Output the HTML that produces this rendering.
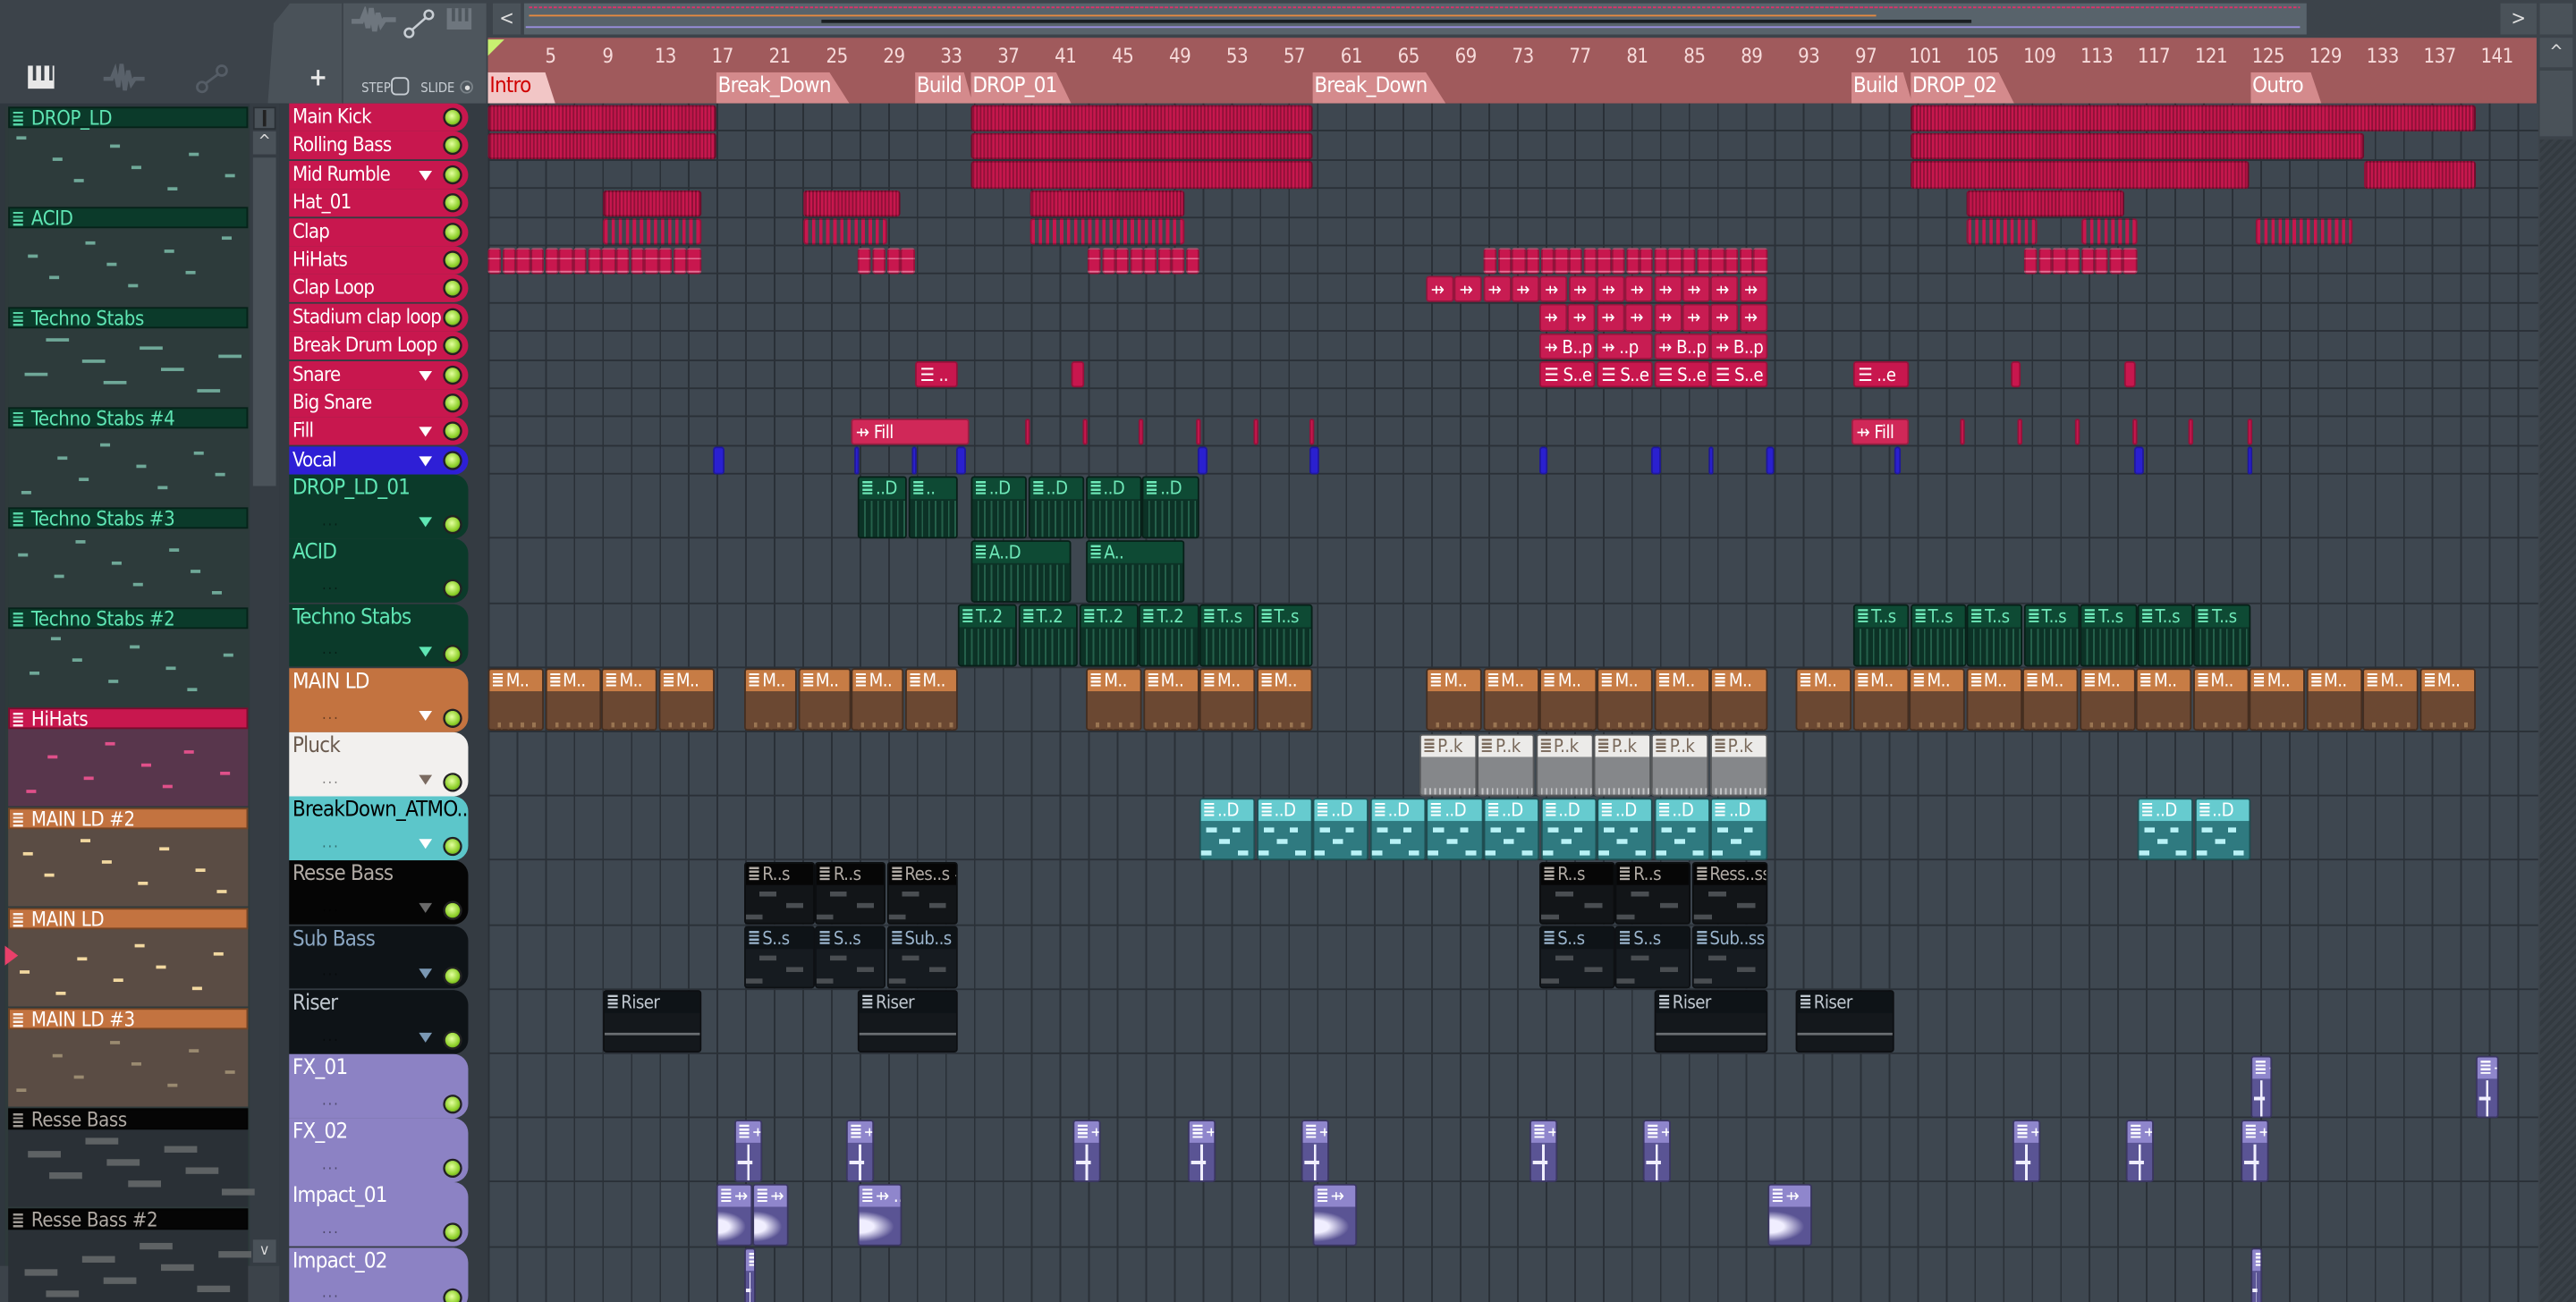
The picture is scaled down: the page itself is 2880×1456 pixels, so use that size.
<!DOCTYPE html>
<html><head><meta charset="utf-8">
<style>
html,body{margin:0;padding:0;width:2880px;height:1456px;overflow:hidden;background:#3a4148;}
#app{position:absolute;left:0;top:0;width:1568px;height:793px;transform:scale(1.83673,1.8361);transform-origin:0 0;background:#3c434a;font-family:"Liberation Sans Narrow","DejaVu Sans Condensed","Liberation Sans",sans-serif;overflow:hidden;}
.a{position:absolute;}
#grid{position:absolute;left:297px;top:63px;width:1248px;height:730px;background-color:#3e4750;
background-image:repeating-linear-gradient(90deg,#2a3037 0,#2a3037 1px,transparent 1px,transparent 17.4px);}
.hl{position:absolute;left:0;width:1248px;height:1px;background:#2a3037;}
.hd{position:absolute;left:176px;width:109px;border-radius:0 9px 9px 0;box-sizing:border-box;padding-left:2px;font-size:12px;letter-spacing:-0.4px;color:#fff;white-space:nowrap;overflow:hidden;}
.led{position:absolute;right:5px;width:9px;height:9px;border-radius:50%;background:radial-gradient(circle at 45% 40%,#e4ffa0,#8ed02a 60%,#4a7a10);box-shadow:0 0 0 1.3px #222;}
.tri{position:absolute;right:22px;width:0;height:0;border-left:4.5px solid transparent;border-right:4.5px solid transparent;border-top:6px solid #fff;}
.dots{position:absolute;left:20px;bottom:1px;font-size:9px;letter-spacing:1px;color:rgba(0,0,0,.45);}
.num{position:absolute;top:27px;font-size:12px;letter-spacing:-0.3px;color:#f6dada;}
.mk{position:absolute;top:44px;height:19px;background:#d48a8c;color:#fff;font-size:13px;letter-spacing:-0.4px;line-height:18px;padding-left:1px;clip-path:polygon(0 0,85% 0,100% 100%,0 100%);}
.clip{position:absolute;box-sizing:border-box;overflow:hidden;border-radius:2px;}
.cl{position:absolute;left:0;top:0;right:0;font-size:11px;letter-spacing:-0.3px;white-space:nowrap;overflow:hidden;padding-left:2px;line-height:13px;}
.lp{position:absolute;left:5px;width:146px;height:13px;font-size:12px;letter-spacing:-0.2px;line-height:13px;padding-left:13px;box-sizing:border-box;white-space:nowrap;}
.ic{position:absolute;left:2px;top:2px;width:6px;height:9px;background:repeating-linear-gradient(180deg,currentColor 0,currentColor 1.3px,transparent 1.3px,transparent 2.4px);opacity:.9}
</style></head><body><div id="app">

<div class="a" style="left:0;top:0;width:175px;height:63px;background:#3c434a"></div>
<div class="a" style="left:17px;top:40px;width:16px;height:14px;background:#e8e8e8"></div>
<div class="a" style="left:20px;top:40px;width:2px;height:9px;background:#3c434a"></div>
<div class="a" style="left:25px;top:40px;width:2px;height:9px;background:#3c434a"></div>
<div class="a" style="left:30px;top:40px;width:2px;height:9px;background:#3c434a"></div>
<svg class="a" style="left:62px;top:38px" width="28" height="20"><path d="M1 10h5l2-5 2 10 2-14 2 16 2-12 2 8 2-3h6" stroke="#59616a" stroke-width="2.5" fill="none"/></svg>
<svg class="a" style="left:118px;top:38px" width="22" height="20"><circle cx="5" cy="15" r="3" stroke="#555d66" stroke-width="1.5" fill="none"/><circle cx="17" cy="5" r="3" stroke="#555d66" stroke-width="1.5" fill="none"/><path d="M7 13l8-6" stroke="#555d66" stroke-width="1.5"/></svg>

<div class="a" style="left:0;top:63px;width:175px;height:710px;background:#2f373e"></div>
<div class="a" style="left:3px;top:65px;width:149px;height:706px;background:#2e3a3b"></div>
<div class="a" style="left:152px;top:63px;width:18px;height:708px;background:#353c43"></div>
<div class="a" style="left:154px;top:65px;width:14px;height:14px;background:#4a5259;border:1px solid #2a3036;box-sizing:border-box"></div>
<div class="a" style="left:160px;top:67px;width:2px;height:10px;background:#222"></div>
<div class="a" style="left:154px;top:80px;width:14px;height:14px;background:#4a5259;color:#ddd;font-size:10px;text-align:center;line-height:14px">^</div>
<div class="a" style="left:154px;top:96px;width:14px;height:200px;background:#4a5259"></div>
<div class="a" style="left:154px;top:755px;width:14px;height:14px;background:#4a5259;color:#ddd;font-size:9px;text-align:center;line-height:14px">v</div>
<div class="a" style="left:0;top:771px;width:175px;height:22px;background:#3c434a;color:#ddd;font-size:16px;text-align:center;line-height:22px">+</div>
<div id="lp"></div>

<div class="a" style="left:163px;top:2px;width:45px;height:61px;background:#4a5259;clip-path:polygon(30% 0,100% 0,100% 100%,0 100%,8% 20%)"></div>
<div class="a" style="left:188px;top:38px;color:#e8e8e8;font-size:15px;font-weight:bold">+</div>
<div class="a" style="left:209px;top:2px;width:87px;height:61px;background:#4e565d"></div>
<svg class="a" style="left:213px;top:4px" width="30" height="18"><path d="M1 9h6l2-5 2 9 2-12 2 14 2-11 2 7 2-3h7" stroke="#6e767e" stroke-width="3" fill="none"/></svg>
<svg class="a" style="left:245px;top:5px" width="20" height="20"><circle cx="4" cy="15" r="2.6" stroke="#c8ced4" stroke-width="1.4" fill="none"/><circle cx="16" cy="4" r="2.6" stroke="#c8ced4" stroke-width="1.4" fill="none"/><path d="M6 13l8-7" stroke="#c8ced4" stroke-width="1.4"/></svg>
<div class="a" style="left:272px;top:5px;width:15px;height:13px;background:#6e767e"></div>
<div class="a" style="left:275px;top:5px;width:1.5px;height:8px;background:#4e565d"></div><div class="a" style="left:279px;top:5px;width:1.5px;height:8px;background:#4e565d"></div><div class="a" style="left:283px;top:5px;width:1.5px;height:8px;background:#4e565d"></div>
<div class="a" style="left:220px;top:49px;font-size:8px;color:#c8ced4">STEP</div>
<div class="a" style="left:238px;top:47px;width:11px;height:11px;border:1.3px solid #c8ced4;border-radius:3px;box-sizing:border-box"></div>
<div class="a" style="left:256px;top:49px;font-size:8px;color:#c8ced4">SLIDE</div>
<div class="a" style="left:280px;top:49px;width:8px;height:8px;border:1.2px solid #7a8288;border-radius:50%;box-sizing:border-box"></div>
<div class="a" style="left:282.5px;top:51.5px;width:3px;height:3px;background:#ddd;border-radius:50%"></div>

<div class="a" style="left:300px;top:2px;width:17px;height:19px;background:#4a5259;color:#ddd;font-size:12px;text-align:center;line-height:19px">&lt;</div>
<div class="a" style="left:319px;top:2px;width:1085px;height:19px;background:#58636b"></div>
<div class="a" style="left:322px;top:4px;width:1078px;height:1px;background:repeating-linear-gradient(90deg,#e0306a 0 2px,transparent 2px 3px)"></div>
<div class="a" style="left:322px;top:9px;width:820px;height:1px;background:#e88a40"></div>
<div class="a" style="left:500px;top:12px;width:700px;height:2px;background:#1a1e22"></div>
<div class="a" style="left:320px;top:16px;width:1080px;height:1px;background:#9a90e0"></div>
<div class="a" style="left:1522px;top:2px;width:22px;height:19px;background:#4a5259;color:#ddd;font-size:12px;text-align:center;line-height:19px">&gt;</div>
<div class="a" style="left:1546px;top:2px;width:20px;height:19px;background:#4a5259"></div>
<div class="a" style="left:1546px;top:23px;width:20px;height:18px;background:#4a5259;color:#ddd;font-size:11px;text-align:center;line-height:18px">^</div>
<div class="a" style="left:1546px;top:43px;width:20px;height:40px;background:#4a5259"></div>
<div class="a" style="left:1546px;top:85px;width:22px;height:708px;background:repeating-linear-gradient(135deg,#333a40 0 2px,#3a4148 2px 4px)"></div>

<div class="a" style="left:297px;top:23px;width:1247px;height:40px;background:#a05a5c"></div>
<div class="a" style="left:297px;top:24px;width:0;height:0;border-left:10px solid #c8f070;border-bottom:10px solid transparent"></div>
<div id="nums"></div>
<div class="mk" style="left:297px;width:40px;background:#f2c6c6;color:#d00000">Intro</div>
<div class="mk" style="left:436px;width:80px">Break_Down</div>
<div class="mk" style="left:557px;width:34px">Build</div>
<div class="mk" style="left:591px;width:60px">DROP_01</div>
<div class="mk" style="left:799px;width:80px">Break_Down</div>
<div class="mk" style="left:1127px;width:36px">Build</div>
<div class="mk" style="left:1163px;width:62px">DROP_02</div>
<div class="mk" style="left:1370px;width:42px">Outro</div>

<div class="a" style="left:170px;top:63px;width:127px;height:730px;background:#343b42"></div>
<div id="grid"></div>
<div id="hdrs"></div>
<div id="clips" class="a" style="left:0;top:0"></div>

<div class="a" style="left:3px;top:576px;width:0;height:0;border-top:6px solid transparent;border-bottom:6px solid transparent;border-left:8px solid #e8406a"></div>

<script>
var rows=[],i;
for(i=0;i<13;i++)rows.push([63+i*17.4,17.4]);
for(i=0;i<13;i++)rows.push([289.2+i*39.2,39.2]);
var g=document.getElementById('grid');
rows.forEach(function(r){var d=document.createElement('div');d.className='hl';d.style.top=(r[0]+r[1]-63-1)+'px';g.appendChild(d);});
var nh='';for(var b=1;b<=141;b+=4){nh+='<div class="num" style="left:'+(297+(b-1)*8.7+(b<10?0:(b<100?-3:-5)))+'px">'+(b==1?'':b)+'</div>';}
document.getElementById('nums').innerHTML=nh;
var H=[["Main Kick","#c8174e","#fff",0],["Rolling Bass","#c8174e","#fff",0],["Mid Rumble","#c8174e","#fff",1],["Hat_01","#c8174e","#fff",0],["Clap","#c8174e","#fff",0],["HiHats","#c8174e","#fff",0],["Clap Loop","#c8174e","#fff",0],["Stadium clap loop","#c8174e","#fff",0],["Break Drum Loop","#c8174e","#fff",0],["Snare","#c8174e","#fff",1],["Big Snare","#c8174e","#fff",0],["Fill","#c8174e","#fff",1],["Vocal","#2e1fd6","#fff",1],
["DROP_LD_01","#0b3a2a","#5fe6b4",1,"#5fe6b4"],["ACID","#0b3a2a","#5fe6b4",0],["Techno Stabs","#0b3a2a","#5fe6b4",1,"#5fe6b4"],["MAIN LD","#c37340","#fff",1,"#fff"],["Pluck","#f2f0ee","#6a5a4e",1,"#7a6a60"],["BreakDown_ATMO..","#5cc6ca","#000",1,"#fff"],["Resse Bass","#050505","#b0aaa4",1,"#6a6a6a"],["Sub Bass","#0e1317","#8aa6c2",1,"#7a98b4"],["Riser","#0e1317","#c0c8d0",1,"#7a98b4"],["FX_01","#8c82c4","#fff",0],["FX_02","#8c82c4","#fff",0],["Impact_01","#8c82c4","#fff",0],["Impact_02","#8c82c4","#fff",0]];
var hh='';
H.forEach(function(h,k){var r=rows[k],big=k>=13;
hh+='<div class="hd" style="top:'+r[0]+'px;height:'+(r[1]-0.4)+'px;background:'+h[1]+';color:'+h[2]+';line-height:17px;font-size:'+(big?13:12)+'px">'+h[0]+
(h[3]?'<div class="tri" style="top:'+(big?26:6)+'px;border-top-color:'+(h[4]||'#fff')+'"></div>':'')+
'<div class="led" style="top:'+(big?26:4)+'px"></div>'+(big?'<div class="dots">...</div>':'')+'</div>';});
document.getElementById('hdrs').innerHTML=hh;
var C=document.getElementById('clips'),out='';
function clip(row,x1,x2,n,o){var r=rows[row],w=(x2-x1)/n;
 for(var j=0;j<n;j++){var s='left:'+(x1+j*w)+'px;top:'+(r[0]+0.5)+'px;width:'+(w-0.3)+'px;height:'+(r[1]-1)+'px;';
  var lab=o.l?(Array.isArray(o.l)?o.l[j]:o.l):'';
  if(row<13){
   out+='<div class="clip" style="'+s+'background:'+o.c+';'+(o.p||'')+'border:1px solid rgba(0,0,0,.25)">'+(lab?'<div class="cl" style="color:#fff;font-size:11px;line-height:15px">'+lab+'</div>':'')+'</div>';
  }else{
   out+='<div class="clip" style="'+s+'background:'+o.b+';border:1px solid rgba(0,0,0,.35)"><div class="cl" style="background:'+o.c+';color:'+o.t+';height:13px">'+(lab?'<span style="display:inline-block;width:6px;height:8px;margin-right:2px;background:repeating-linear-gradient(180deg,'+o.t+' 0 1.3px,transparent 1.3px 2.3px)"></span>'+lab:'')+'</div>'+
   '<div style="position:absolute;left:0;right:0;top:14px;bottom:0;background:'+(o.q||'none')+'"></div></div>';
  }}}
var K="#c8174e",stripe="background-image:repeating-linear-gradient(90deg,rgba(0,0,0,.28) 0 1px,transparent 1px 2.2px);";
[[297,436],[591,799],[1163,1507]].forEach(function(a){clip(0,a[0],a[1],1,{c:K,p:stripe});});
[[297,436],[591,799],[1163,1439]].forEach(function(a){clip(1,a[0],a[1],1,{c:K,p:stripe});});
[[591,799],[1163,1369],[1439,1507]].forEach(function(a){clip(2,a[0],a[1],1,{c:K,p:stripe});});
[[367,427],[489,548],[627,721],[1197,1293]].forEach(function(a){clip(3,a[0],a[1],1,{c:K,p:stripe});});
var cs="background-image:repeating-linear-gradient(90deg,"+K+" 0 2px,#3e4750 2px 4.3px);";
[[367,427],[489,540],[627,721],[1197,1240],[1267,1301],[1373,1432]].forEach(function(a){clip(4,a[0],a[1],1,{c:K,p:cs});});
var hs="background-image:repeating-linear-gradient(180deg,transparent 0 5px,rgba(255,200,220,.5) 5px 6px,transparent 6px 8px);";
clip(5,297,427,15,{c:K,p:hs});clip(5,522,557,4,{c:K,p:hs});clip(5,662,730,8,{c:K,p:hs});clip(5,903,1076,20,{c:K,p:hs});clip(5,1232,1301,8,{c:K,p:hs});
clip(6,868,1076,12,{c:"#c81c52",l:"⇸"});
clip(7,937,1076,8,{c:"#c81c52",l:"⇸"});
clip(8,937,1076,4,{c:"#c81c52",l:["⇸ B..p","⇸ ..p","⇸ B..p","⇸ B..p"]});
clip(9,557,583,1,{c:K,l:"☰ .."});clip(9,652,660,1,{c:K});clip(9,937,1076,4,{c:K,l:"☰ S..e"});clip(9,1128,1162,1,{c:K,l:"☰ ..e"});clip(9,1224,1230,1,{c:K});clip(9,1293,1300,1,{c:K});
clip(11,518,590,1,{c:"#d02858",l:"⇸ Fill"});clip(11,1127,1162,1,{c:"#d02858",l:"⇸ Fill"});
[624,659,693,728,763,797,1193,1228,1263,1298,1332,1368].forEach(function(x){clip(11,x,x+3,1,{c:K});});
[[434,441],[520,523],[555,558],[582,588],[729,735],[797,803],[937,942],[1005,1011],[1040,1043],[1075,1080],[1153,1157],[1299,1305],[1368,1371]].forEach(function(a){clip(12,a[0],a[1],1,{c:"#2a20d0"});});
var G={c:"#0e4a34",b:"#0c3226",t:"#6ee8b8",q:"repeating-linear-gradient(90deg,transparent 0 3px,rgba(110,232,184,.25) 3px 4px)"};
clip(13,522,583,2,Object.assign({l:["..D",".."]},G));clip(13,591,730,4,Object.assign({l:"..D"},G));
clip(14,591,652,1,Object.assign({l:"A..D"},G));clip(14,661,721,1,Object.assign({l:"A.."},G));
clip(15,583,730,4,Object.assign({l:"T..2"},G));clip(15,730,799,2,Object.assign({l:"T..s"},G));clip(15,1128,1370,7,Object.assign({l:"T..s"},G));
var O={c:"#c77c45",b:"#6b4832",t:"#fff"};
O.q="repeating-linear-gradient(90deg,transparent 0 5px,rgba(240,200,140,.35) 5px 7px) 0 18px/100% 3px no-repeat,repeating-linear-gradient(90deg,transparent 0 3px,rgba(240,200,140,.6) 3px 4px) 0 22px/100% 2px no-repeat";
clip(16,297,435,4,Object.assign({l:"M.."},O));clip(16,453,583,4,Object.assign({l:"M.."},O));clip(16,661,799,4,Object.assign({l:"M.."},O));clip(16,868,1076,6,Object.assign({l:"M.."},O));clip(16,1093,1507,12,Object.assign({l:"M.."},O));
clip(17,864,1076,6,{c:"#ecebe9",b:"#85878a",t:"#7a6a5c",l:"P..k",q:"repeating-linear-gradient(90deg,transparent 0 2px,rgba(255,255,255,.5) 2px 3px) 0 18px/100% 4px no-repeat"});
var T={c:"#66cbcf",b:"#2f7a80",t:"#fff",l:"..D",q:"linear-gradient(90deg,transparent 10%,#b8f2f6 10% 30%,transparent 30% 60%,#b8f2f6 60% 75%,transparent 75%) 0 3px/100% 3px no-repeat,linear-gradient(90deg,transparent 35%,#b8f2f6 35% 55%,transparent 55%) 0 10px/100% 3px no-repeat,linear-gradient(90deg,#b8f2f6 0 20%,transparent 20% 70%,#b8f2f6 70% 90%,transparent 90%) 0 17px/100% 3px no-repeat"};
clip(18,730,1076,10,T);clip(18,1301,1370,2,T);
var R={c:"#060606",b:"#121518",t:"#b0aaa4",q:"linear-gradient(90deg,transparent 20%,#4a4e52 20% 45%,transparent 45%) 0 3px/100% 3px no-repeat,linear-gradient(90deg,transparent 60%,#4a4e52 60% 85%,transparent 85%) 0 10px/100% 3px no-repeat,linear-gradient(90deg,#4a4e52 0 25%,transparent 25%) 0 17px/100% 3px no-repeat"};
clip(19,453,583,3,Object.assign({l:["R..s","R..s","Res..s #2"]},R));clip(19,937,1076,3,Object.assign({l:["R..s","R..s","Ress..ss #2"]},R));
var S=Object.assign({},R,{c:"#0e1317",b:"#161b20",t:"#9ab4cc"});
clip(20,453,583,3,Object.assign({l:["S..s","S..s","Sub..s #2"]},S));clip(20,937,1076,3,Object.assign({l:["S..s","S..s","Sub..ss #2"]},S));
var RI={c:"#0e1317",b:"#14181c",t:"#c0c8d0",l:"Riser",q:"linear-gradient(#6a6e72,#6a6e72) 0 11px/100% 1.5px no-repeat"};
[[367,427],[522,583],[1007,1076],[1093,1153]].forEach(function(a){clip(21,a[0],a[1],1,RI);});
var P={c:"#8f86cc",b:"#5a5494",t:"#fff",l:"⇸",q:"linear-gradient(90deg,transparent 45%,#f0eeff 45% 55%,transparent 55%) 0 0/100% 100% no-repeat,linear-gradient(transparent 45%,#f0eeff 45% 55%,transparent 55%) 20% 0/60% 100% no-repeat"};
clip(22,1370,1383,1,P);clip(22,1507,1521,1,P);
[447,515,653,723,792,931,1000,1225,1294,1364].forEach(function(x){clip(23,x,x+17,1,P);});
var IM=Object.assign({},P,{q:"radial-gradient(ellipse at 0 50%,#f0eeff 0 25%,transparent 60%)"});
clip(24,436,480,2,Object.assign({},IM,{l:["⇸","⇸ ..1"]}));clip(24,522,549,1,Object.assign({},IM,{l:"⇸ ..1"}));clip(24,799,826,1,IM);clip(24,1076,1103,1,IM);
clip(25,453,460,1,P);clip(25,1370,1377,1,P);
C.innerHTML=out;
var L=[["DROP_LD","#0b3a2a","#5fe6b4","#2d3b3b","#6fa898"],["ACID","#0b3a2a","#5fe6b4","#2d3b3b","#6fa898"],["Techno Stabs","#0b3a2a","#5fe6b4","#2d3b3b","#6fa898"],["Techno Stabs #4","#0b3a2a","#5fe6b4","#2d3b3b","#6fa898"],["Techno Stabs #3","#0b3a2a","#5fe6b4","#2d3b3b","#6fa898"],["Techno Stabs #2","#0b3a2a","#5fe6b4","#2d3b3b","#6fa898"],["HiHats","#c8174e","#fff","#58364c","#e0508a"],["MAIN LD #2","#c37340","#fff","#5a4c44","#f2d8a0"],["MAIN LD","#c37340","#fff","#5a4c44","#f2d8a0"],["MAIN LD #3","#c37340","#fff","#5a4c44","#9a8a70"],["Resse Bass","#050505","#b0aaa4","#2a3036","#5e6264"],["Resse Bass #2","#050505","#b0aaa4","#2a3036","#5e6264"]];
var lh='';
L.forEach(function(l,k){var y=65+k*61;
lh+='<div class="a" style="left:5px;top:'+(y+13)+'px;width:146px;height:47px;background:'+l[3]+'"></div>';
lh+='<div class="lp" style="top:'+y+'px;background:'+l[1]+';color:'+l[2]+';border:1px solid rgba(0,0,0,.4)"><div class="ic" style="color:'+l[2]+'"></div>'+l[0]+'</div>';
for(var j=0;j<8;j++){var px=10+j*17+((k*7+j*5)%9),py=y+18+((k*11+j*13)%34);
lh+='<div class="a" style="left:'+px+'px;top:'+py+'px;width:'+(k>=10?20:(k==2?14:6))+'px;height:'+(k>=10?4:2)+'px;background:'+l[4]+'"></div>';}
});
document.getElementById('lp').innerHTML=lh;
</script>
</div></body></html>
